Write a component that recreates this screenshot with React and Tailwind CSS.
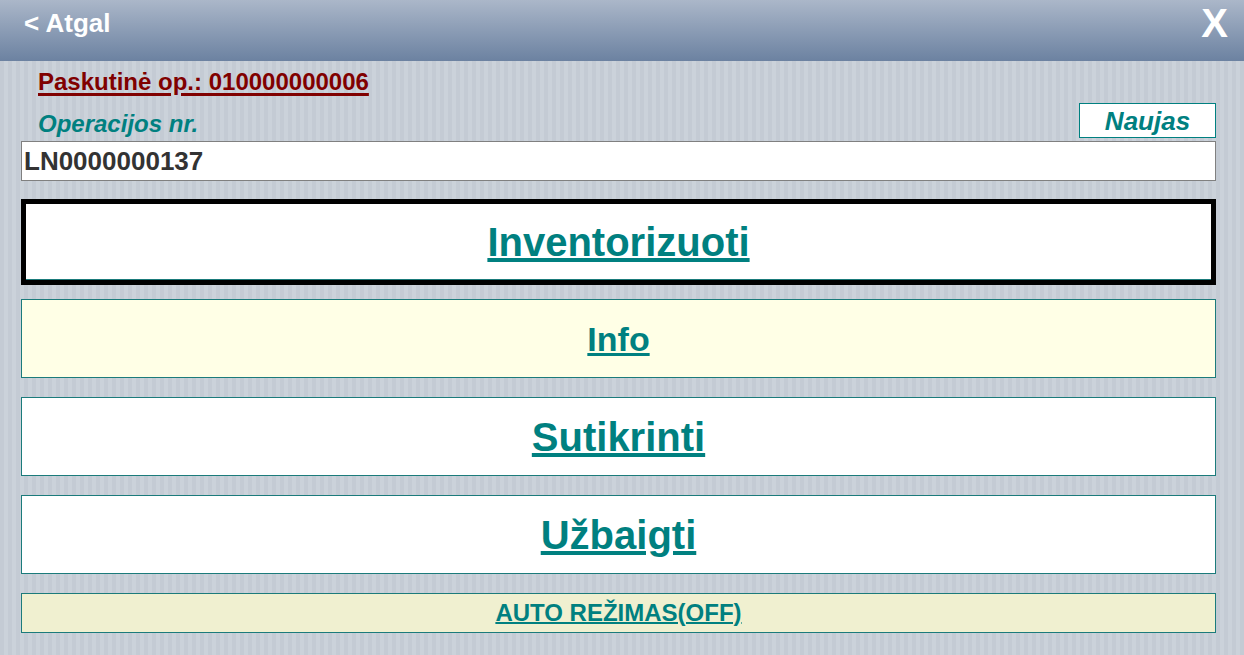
import React from 'react'

const font = { fontFamily: '"Liberation Sans", Arial, sans-serif' }

function BigButton({ label, className, size = 'text-[40px]' }) {
  return (
    <button
      className={`w-full flex items-center justify-center cursor-pointer ${className}`}
    >
      <span className={`${size} font-bold text-[#008080] underline leading-none`}>{label}</span>
    </button>
  )
}

export default function App() {
  return (
    <div
      style={font}
      className="h-[655px] w-full overflow-hidden bg-[repeating-linear-gradient(90deg,#c4cbd4_0px,#c4cbd4_4px,#cbd2da_4px,#cbd2da_8px)]"
    >
      {/* Kepurė */}
      <header className="h-[61px] flex items-start justify-between bg-gradient-to-b from-[#abb7c9] to-[#6c82a1] pl-[24px] pr-[16px]">
        <span className="text-white font-bold text-[26px] leading-none mt-[10px]">&lt; Atgal</span>
        <span className="text-white font-bold text-[40px] leading-none mt-[3px]">X</span>
      </header>

      <div className="px-[21px] pr-[28px]">
        <div className="pl-[17px] pt-[7px]">
          <span className="text-[#800000] font-bold text-[24px] leading-[28px] underline decoration-[3px] underline-offset-[3px]">
            Paskutinė op.: 010000000006
          </span>
        </div>

        <div className="flex items-end justify-between mt-[6px]">
          <span className="pl-[17px] text-[#008080] font-bold italic text-[24px] leading-[28px]">
            Operacijos nr.
          </span>
          <div className="w-[137px] h-[35px] bg-white border border-[#008080] flex items-center justify-center">
            <span className="text-[#008080] font-bold italic text-[26px] leading-none">Naujas</span>
          </div>
        </div>

        <div className="mt-[3px] h-[40px] bg-white border border-[#808080] flex items-center pl-[2px]">
          <span className="text-[#333333] font-bold text-[26px] leading-none">LN0000000137</span>
        </div>

        <BigButton
          label="Inventorizuoti"
          className="mt-[18px] h-[86px] bg-white border-[5px] border-black shadow-[inset_0_-1px_0_#1b7b7b]"
        />
        <BigButton
          label="Info"
          size="text-[34px]"
          className="mt-[14px] h-[79px] bg-[#ffffe6] border border-[#1b7b7b]"
        />
        <BigButton
          label="Sutikrinti"
          className="mt-[19px] h-[79px] bg-white border border-[#1b7b7b]"
        />
        <BigButton
          label="Užbaigti"
          className="mt-[19px] h-[79px] bg-white border border-[#1b7b7b]"
        />

        <button className="mt-[19px] w-full h-[40px] bg-[#f0f0d0] border border-[#1b7b7b] flex items-center justify-center cursor-pointer">
          <span className="text-[#008080] font-bold text-[24px] leading-none underline decoration-2">
            AUTO REŽIMAS(OFF)
          </span>
        </button>
      </div>
    </div>
  )
}
